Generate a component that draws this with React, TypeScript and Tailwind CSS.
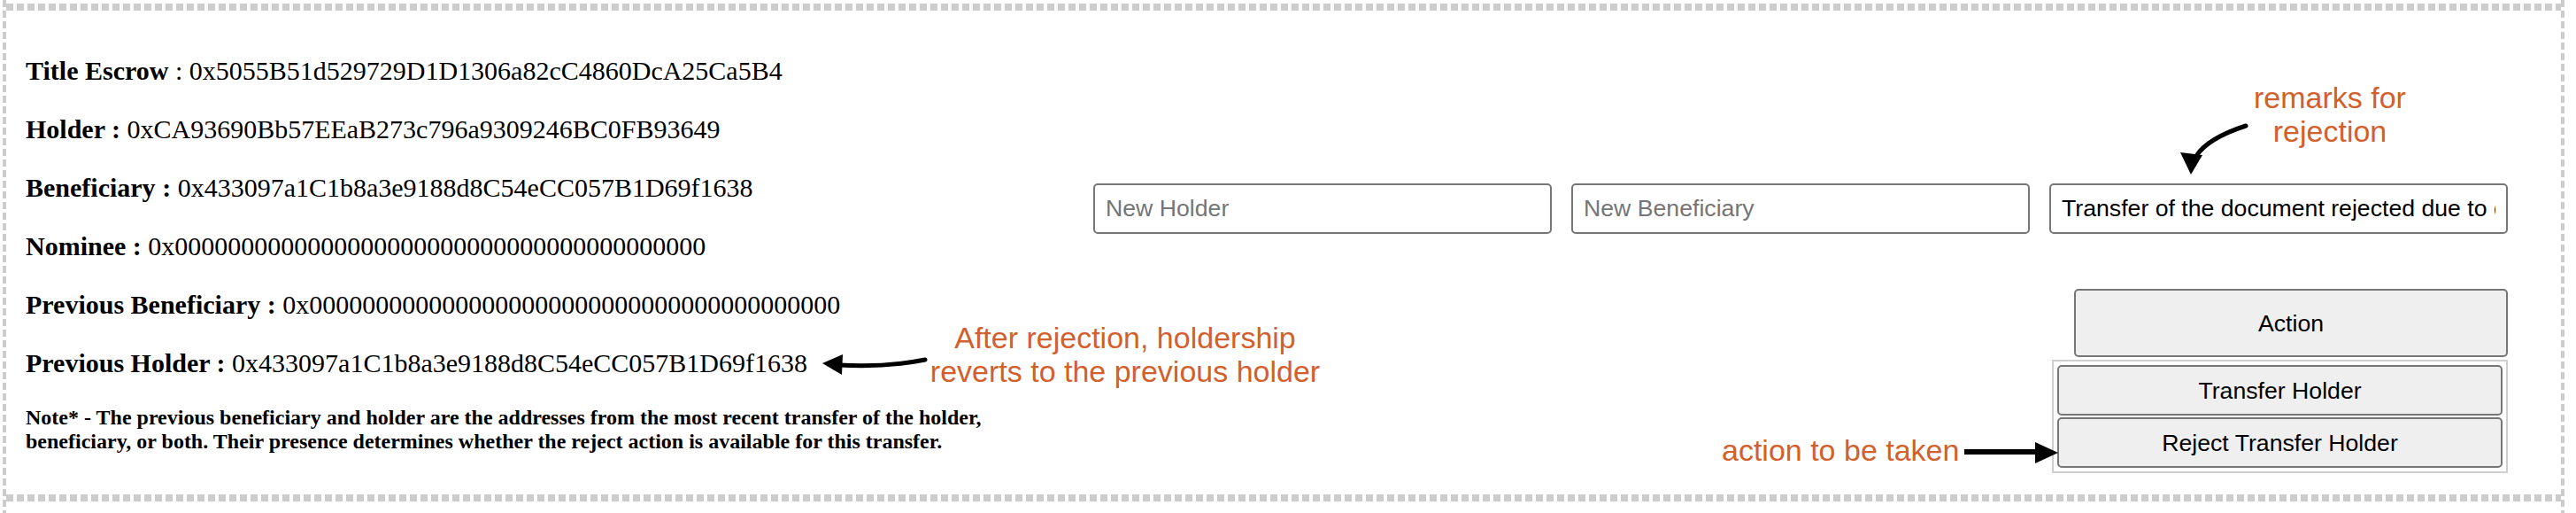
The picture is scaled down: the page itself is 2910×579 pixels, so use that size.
import React from 'react';

const serif = "font-['Liberation_Serif','Times_New_Roman',serif]";
const sans = "font-['Liberation_Sans',Arial,sans-serif]";

const dashX =
  'h-[8px] [background-image:repeating-linear-gradient(to_right,#cccccc_0px,#cccccc_8px,transparent_8px,transparent_12px)]';
const dashY =
  'w-[4px] shrink-0 [background-image:repeating-linear-gradient(to_bottom,#cccccc_0px,#cccccc_8px,transparent_8px,transparent_12px)]';

const rows: { label: string; value: string; boldColon?: boolean }[] = [
  { label: 'Title Escrow', value: '0x5055B51d529729D1D1306a82cC4860DcA25Ca5B4', boldColon: false },
  { label: 'Holder', value: '0xCA93690Bb57EEaB273c796a9309246BC0FB93649' },
  { label: 'Beneficiary', value: '0x433097a1C1b8a3e9188d8C54eCC057B1D69f1638' },
  { label: 'Nominee', value: '0x0000000000000000000000000000000000000000' },
  { label: 'Previous Beneficiary', value: '0x0000000000000000000000000000000000000000' },
  { label: 'Previous Holder', value: '0x433097a1C1b8a3e9188d8C54eCC057B1D69f1638' },
];

const inputCls =
  "h-[57px] w-[518px] rounded-[5px] border-2 border-[#767676] bg-white px-[12px] text-[26.67px] text-black outline-none placeholder:text-[#757575] font-['Liberation_Sans',Arial,sans-serif]";

const btnCls =
  "flex items-center justify-center rounded-[5px] border-2 border-[#767676] bg-[#efefef] text-[26.67px] text-black font-['Liberation_Sans',Arial,sans-serif]";

export default function App() {
  return (
    <div className="relative flex h-[579px] w-[2910px] overflow-hidden bg-white pl-[3px] pr-[13px]">
      <div className={dashY} />
      <div className="flex min-w-0 flex-1 flex-col">
        <div className="h-[4px]" />
        <div className={dashX} />

        <div className="flex h-[546px] pl-[22px] pr-[60px]">
          {/* escrow details */}
          <div className={`flex w-[1160px] flex-col gap-[30px] pt-[50px] text-black ${serif}`}>
            {rows.map((r) => (
              <p key={r.label} className="whitespace-nowrap text-[30px] leading-[36px]">
                {r.boldColon === false ? (
                  <>
                    <b>{r.label}</b> : {r.value}
                  </>
                ) : (
                  <>
                    <b>{r.label} :</b> {r.value}
                  </>
                )}
              </p>
            ))}
            <p className="text-[24px] font-bold leading-[27px]">
              Note* - The previous beneficiary and holder are the addresses from the most recent transfer of the
              holder, beneficiary, or both. Their presence determines whether the reject action is available for this
              transfer.
            </p>
          </div>

          {/* inputs + actions */}
          <div className="ml-auto flex flex-col items-end pt-[195px]">
            <div className="flex gap-[22px]">
              <input className={inputCls} placeholder="New Holder" readOnly />
              <input className={inputCls} placeholder="New Beneficiary" readOnly />
              <input
                className={inputCls}
                value="Transfer of the document rejected due to discrepancies in the details"
                readOnly
              />
            </div>
            <button className={`${btnCls} mt-[62px] h-[77px] w-[490px]`}>Action</button>
            <div className="mt-[3px] flex w-[515px] flex-col gap-[2px] border-2 border-[#cfcfcf] p-[4px]">
              <button className={`${btnCls} h-[57px] w-full`}>Transfer Holder</button>
              <button className={`${btnCls} h-[57px] w-full`}>Reject Transfer Holder</button>
            </div>
          </div>
        </div>

        <div className={dashX} />
      </div>
      <div className={dashY} />

      {/* annotations */}
      <div
        className={`absolute left-[2532px] top-[91px] w-[200px] text-center text-[34px] leading-[38px] text-[#d2602d] ${sans}`}
      >
        remarks for
        <br />
        rejection
      </div>
      <svg className="absolute left-[2450px] top-[130px]" width="100" height="75" viewBox="0 0 100 75">
        <path d="M87 12 Q44 26 31 46" fill="none" stroke="#000" strokeWidth="5" strokeLinecap="round" />
        <polygon points="13,42 38,45 25,67" fill="#000" />
      </svg>

      <div
        className={`absolute left-[1041px] top-[362px] w-[460px] text-center text-[34px] leading-[38px] text-[#d2602d] ${sans}`}
      >
        After rejection, holdership
        <br />
        reverts to the previous holder
      </div>
      <svg className="absolute left-[920px] top-[395px]" width="135" height="35" viewBox="0 0 135 35">
        <path d="M28 17 Q80 20 125 11" fill="none" stroke="#000" strokeWidth="5" strokeLinecap="round" />
        <polygon points="9,15 32,5 31,28" fill="#000" />
      </svg>

      <div className={`absolute left-[1945px] top-[489px] whitespace-nowrap text-[34px] leading-[38px] text-[#d2602d] ${sans}`}>
        action to be taken
      </div>
      <svg className="absolute left-[2215px] top-[495px]" width="112" height="32" viewBox="0 0 112 32">
        <rect x="4" y="12" width="82" height="6" fill="#000" />
        <polygon points="84,4 84,28 110,16" fill="#000" />
      </svg>
    </div>
  );
}
